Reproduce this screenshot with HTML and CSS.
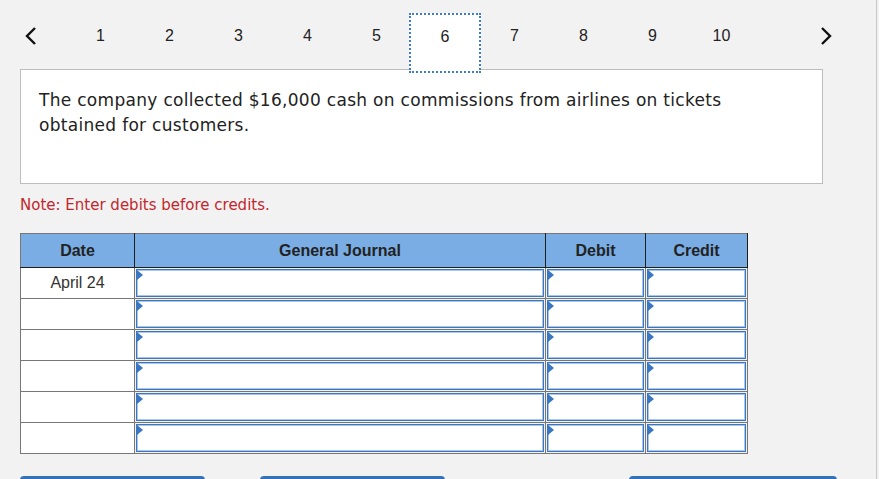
FILE: index.html
```html
<!DOCTYPE html>
<html>
<head>
<meta charset="utf-8">
<link rel="stylesheet" href="styles.css">
</head>
<body>
<div class="page">
  <nav class="pager">
    <span class="arrow arrow-left">
      <svg width="12" height="20" viewBox="0 0 12 20"><path d="M10 2 L2 10 L10 18" fill="none" stroke="#111" stroke-width="2.4"/></svg>
    </span>
    <div class="items">
      <span class="item">1</span>
      <span class="item">2</span>
      <span class="item">3</span>
      <span class="item">4</span>
      <span class="item">5</span>
      <span class="item current">6</span>
      <span class="item">7</span>
      <span class="item">8</span>
      <span class="item">9</span>
      <span class="item">10</span>
    </div>
    <span class="arrow arrow-right">
      <svg width="12" height="20" viewBox="0 0 12 20"><path d="M2 2 L10 10 L2 18" fill="none" stroke="#111" stroke-width="2.4"/></svg>
    </span>
  </nav>
  <div class="question">
    The company collected $16,000 cash on commissions from airlines on tickets obtained for customers.
  </div>
  <p class="note">Note: Enter debits before credits.</p>
  <table class="journal">
    <thead>
      <tr>
        <th class="c-date">Date</th>
        <th class="c-gj">General Journal</th>
        <th class="c-debit">Debit</th>
        <th class="c-credit">Credit</th>
      </tr>
    </thead>
    <tbody>
      <tr>
        <td class="date">April 24</td>
        <td><div class="field"></div></td>
        <td><div class="field"></div></td>
        <td><div class="field"></div></td>
      </tr>
      <tr>
        <td class="date"></td>
        <td><div class="field"></div></td>
        <td><div class="field"></div></td>
        <td><div class="field"></div></td>
      </tr>
      <tr>
        <td class="date"></td>
        <td><div class="field"></div></td>
        <td><div class="field"></div></td>
        <td><div class="field"></div></td>
      </tr>
      <tr>
        <td class="date"></td>
        <td><div class="field"></div></td>
        <td><div class="field"></div></td>
        <td><div class="field"></div></td>
      </tr>
      <tr>
        <td class="date"></td>
        <td><div class="field"></div></td>
        <td><div class="field"></div></td>
        <td><div class="field"></div></td>
      </tr>
      <tr>
        <td class="date"></td>
        <td><div class="field"></div></td>
        <td><div class="field"></div></td>
        <td><div class="field"></div></td>
      </tr>
    </tbody>
  </table>
  <div class="buttons">
    <span class="btn btn-a"></span>
    <span class="btn btn-b"></span>
    <span class="btn btn-c"></span>
  </div>
</div>
</body>
</html>
```
FILE: styles.css
```css
html, body {
  margin: 0;
  padding: 0;
  background: #f2f2f2;
  overflow: hidden;
}
.page {
  width: 876px;
  height: 479px;
  border-right: 1px solid #c8c8c8;
  box-sizing: content-box;
}
.pager {
  display: flex;
  align-items: flex-start;
  height: 69px;
  padding-left: 20px;
  position: relative;
  z-index: 1;
  font-family: "Liberation Sans", Arial, sans-serif;
  font-size: 16px;
  color: #222;
}
.arrow {
  display: flex;
  justify-content: center;
  padding-top: 26px;
}
.arrow-left {
  width: 22px;
  margin-right: 24px;
}
.arrow-right {
  width: 28px;
  margin-left: 56px;
}
.items {
  display: flex;
}
.item {
  width: 69px;
  text-align: center;
  padding-top: 27px;
  line-height: 18px;
}
.item.current {
  box-sizing: border-box;
  width: 72px;
  height: 60px;
  margin: 13px -1px 0 -2px;
  padding-top: 13px;
  background: #fff;
  border: 2px dotted #3f7cc4;
}
.question {
  box-sizing: border-box;
  width: 803px;
  height: 115px;
  margin-left: 20px;
  padding: 18px 60px 0 18px;
  background: #fff;
  border: 1px solid #bdbdbd;
  font-family: "DejaVu Sans", Verdana, sans-serif;
  font-size: 17px;
  letter-spacing: 0.3px;
  line-height: 25px;
  color: #222;
}
.note {
  margin: 12px 0 0 20px;
  font-family: "DejaVu Sans", Verdana, sans-serif;
  font-size: 15px;
  line-height: 18px;
  color: #c1272d;
}
.journal {
  margin: 19px 0 0 20px;
  border-collapse: collapse;
  font-family: "Liberation Sans", Arial, sans-serif;
  font-size: 16px;
  color: #222;
  table-layout: fixed;
}
.journal th {
  background: #7aade4;
  height: 33px;
  padding: 0;
  font-weight: bold;
  border: 1px solid #1e1e1e;
  border-top-color: #777;
}
.journal th.c-date { width: 113px; border-left-color: #777; }
.journal th.c-gj { width: 410px; }
.journal th.c-debit { width: 99px; }
.journal th.c-credit { width: 101px; border-right-color: #1e1e1e; }
.journal td {
  height: 30px;
  padding: 1px 1px 1px 1px;
  border: 1px solid #777;
  background: #fff;
  box-sizing: border-box;
}
.journal tbody tr td:not(.date) {
  background: #f2f2f2;
}
.journal td.date {
  text-align: center;
  color: #333;
  padding: 0;
}
.field {
  position: relative;
  box-sizing: border-box;
  height: 28px;
  background: #fff;
  border: 1px solid #3c77bd;
  box-shadow: inset 0 0 0 1px #a9c7ec;
}
.field::before {
  content: "";
  position: absolute;
  left: 0;
  top: 0;
  width: 0;
  height: 0;
  border-top: 5px solid transparent;
  border-bottom: 5px solid transparent;
  border-left: 6px solid #3a77c2;
}
.buttons {
  display: flex;
  margin-top: 22px;
  padding-left: 20px;
}
.btn {
  display: block;
  height: 10px;
  background: #3471b6;
  border-radius: 4px 4px 0 0;
}
.btn-a { width: 185px; }
.btn-b { width: 185px; margin-left: 55px; }
.btn-c { width: 208px; margin-left: 184px; }
```
